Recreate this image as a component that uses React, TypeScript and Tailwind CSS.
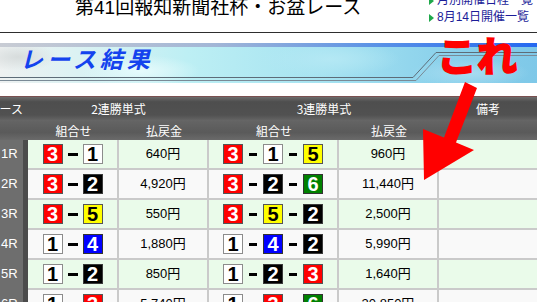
const rows = [
  { r: "1R", two: [3, 1], twoPay: "640円", three: [3, 1, 5], threePay: "960円" },
  { r: "2R", two: [3, 2], twoPay: "4,920円", three: [3, 2, 6], threePay: "11,440円" },
  { r: "3R", two: [3, 5], twoPay: "550円", three: [3, 5, 2], threePay: "2,500円" },
  { r: "4R", two: [1, 4], twoPay: "1,880円", three: [1, 4, 2], threePay: "5,990円" },
  { r: "5R", two: [1, 2], twoPay: "850円", three: [1, 2, 3], threePay: "1,640円" },
  { r: "6R", two: [1, 3], twoPay: "5,740円", three: [1, 3, 6], threePay: "20,850円" },
];

const boxColors: { [key: number]: string } = {
  1: "bg-white text-black border-[#8c8c8c]",
  2: "bg-black text-white border-[#3a3a3a]",
  3: "bg-[#ff0000] text-white border-[#555555]",
  4: "bg-[#0000ff] text-white border-[#333333]",
  5: "bg-[#ffff00] text-black border-[#555555]",
  6: "bg-[#008000] text-white border-[#333333]",
};

const NumBox = ({ n }: { n: number }) => (
  <span
    className={`w-5 h-5 flex items-center justify-center border text-[20px] font-bold leading-none font-['Liberation_Sans',sans-serif] ${boxColors[n]}`}
  >
    {n}
  </span>
);

const Combo = ({ nums, dash }: { nums: number[]; dash: string }) => (
  <div className="flex items-center">
    {nums.map((n, i) => (
      <div key={i} className="flex items-center">
        {i > 0 && <span className={`bg-black h-[3px] ${dash}`} />}
        <NumBox n={n} />
      </div>
    ))}
  </div>
);

const App = () => {
  return (
    <div className="relative w-[537px] h-[302px] overflow-hidden bg-white font-['Liberation_Sans','Noto_Sans_CJK_JP',sans-serif]">
      {/* page title + links */}
      <div className="h-[32px] flex">
        <div className="w-[429px] pl-[75px] -mt-[2px] text-[19px] leading-none text-black whitespace-nowrap">
          第41回報知新聞社杯・お盆レース
        </div>
        <div className="-mt-[8px] flex flex-col text-[12px] leading-[17px] text-[#1c1c98] whitespace-nowrap">
          {["月別開催日程一覧", "8月14日開催一覧"].map((t) => (
            <div key={t} className="flex items-center gap-[3px]">
              <svg width="5" height="8" viewBox="0 0 5 8">
                <polygon points="0,0 5,4 0,8" fill="#1fa84a" />
              </svg>
              {t}
            </div>
          ))}
        </div>
      </div>
      <div className="h-px bg-[#2e2e2e]" />

      {/* banner */}
      <div className="relative mt-[10px] h-[40px]">
        <div className="h-[4px] bg-[linear-gradient(90deg,#c8ccd4,#a2b6d6_40%,#5a92e6_70%,#2468f0)]" />
        <div className="h-[36px] pl-[20px] bg-[radial-gradient(ellipse_40px_14px_at_18px_10px,#d7dcdc,transparent),radial-gradient(ellipse_60px_16px_at_140px_24px,#e6fbfc,transparent),radial-gradient(ellipse_70px_18px_at_330px_12px,#b4e8f4,transparent),radial-gradient(ellipse_60px_14px_at_470px_26px,#a8dcf0,transparent),linear-gradient(90deg,#eef1f1,#dcf2f3_14%,#bdeff4_35%,#a6e3f1_60%,#8ed3ec_80%,#7ec8e8)]">
          <span className="text-[23px] italic font-bold leading-none tracking-[4px] text-[#1443ee] font-['Noto_Sans_CJK_JP',sans-serif]">
            レース結果
          </span>
        </div>
        <svg className="absolute left-0 top-0" width="537" height="40">
          <polyline points="0,34.5 413,34.5 436,9.5 537,9.5" fill="none" stroke="#5d6c78" strokeWidth="1" />
          <polyline points="0,37.5 416,37.5 439,12.5 537,12.5" fill="none" stroke="#7a8a96" strokeWidth="1" />
        </svg>
      </div>

      {/* results table */}
      <div className="mt-[13px] text-[12px] text-white font-['Noto_Sans_CJK_JP',sans-serif]">
        <div className="h-[25px] flex items-center border-t border-[#7a5050] bg-[linear-gradient(#6c6c6c,#4e4e4e_20%,#515151_75%,#676767)]">
          <div className="w-[23px] flex justify-end whitespace-nowrap">レース</div>
          <div className="w-[5px]" />
          <div className="w-[181px] text-center">2連勝単式</div>
          <div className="w-[230px] text-center">3連勝単式</div>
          <div className="flex-1 text-center">備考</div>
        </div>
        <div className="h-[19px] flex items-center bg-[linear-gradient(#646464,#5a5a5a_60%,#6a6a6a)]">
          <div className="w-[28px]" />
          <div className="w-[91px] text-center">組合せ</div>
          <div className="w-[90px] text-center">払戻金</div>
          <div className="w-[130px] text-center">組合せ</div>
          <div className="w-[100px] text-center">払戻金</div>
        </div>

        {rows.map((row, i) => (
          <div key={row.r} className="flex h-[30px]">
            <div className="w-[23px] pl-px pb-[2px] flex items-center bg-[#6e6e6e] text-[13px] font-['Liberation_Sans',sans-serif]">
              {row.r}
            </div>
            <div className="w-[5px] bg-[#4c4c4c]" />
            <div
              className={`flex flex-1 border-b-2 border-[#cacaca] text-black text-[13px] font-['Liberation_Sans','Noto_Sans_CJK_JP',sans-serif] ${
                i % 2 === 0 ? "bg-[#eafbea]" : "bg-[#f9f9f9]"
              }`}
            >
              <div className="w-[91px] border-r-2 border-[#cacaca] flex items-center justify-center">
                <Combo nums={row.two} dash="w-[10px] mx-[5px]" />
              </div>
              <div className="w-[90px] border-r-2 border-[#cacaca] flex items-center justify-center">
                {row.twoPay}
              </div>
              <div className="w-[130px] border-r-2 border-[#cacaca] flex items-center justify-center">
                <Combo nums={row.three} dash="w-[8px] mx-[6px]" />
              </div>
              <div className="w-[100px] border-r-2 border-[#cacaca] flex items-center justify-center">
                {row.threePay}
              </div>
              <div className="flex-1" />
            </div>
          </div>
        ))}
      </div>

      {/* annotation */}
      <div className="absolute left-[437px] top-[34px] text-[40px] font-bold leading-none text-[#ff0000] [-webkit-text-stroke:2px_#ff0000] font-['Noto_Sans_CJK_JP',sans-serif]">
        これ
      </div>
      <svg className="absolute left-0 top-0" width="537" height="302">
        <polygon
          points="465,82 477,88 456,142.6 474,150 424,180 423,129 444,137.6"
          fill="#ff0000"
        />
      </svg>
    </div>
  );
};

export default App;
